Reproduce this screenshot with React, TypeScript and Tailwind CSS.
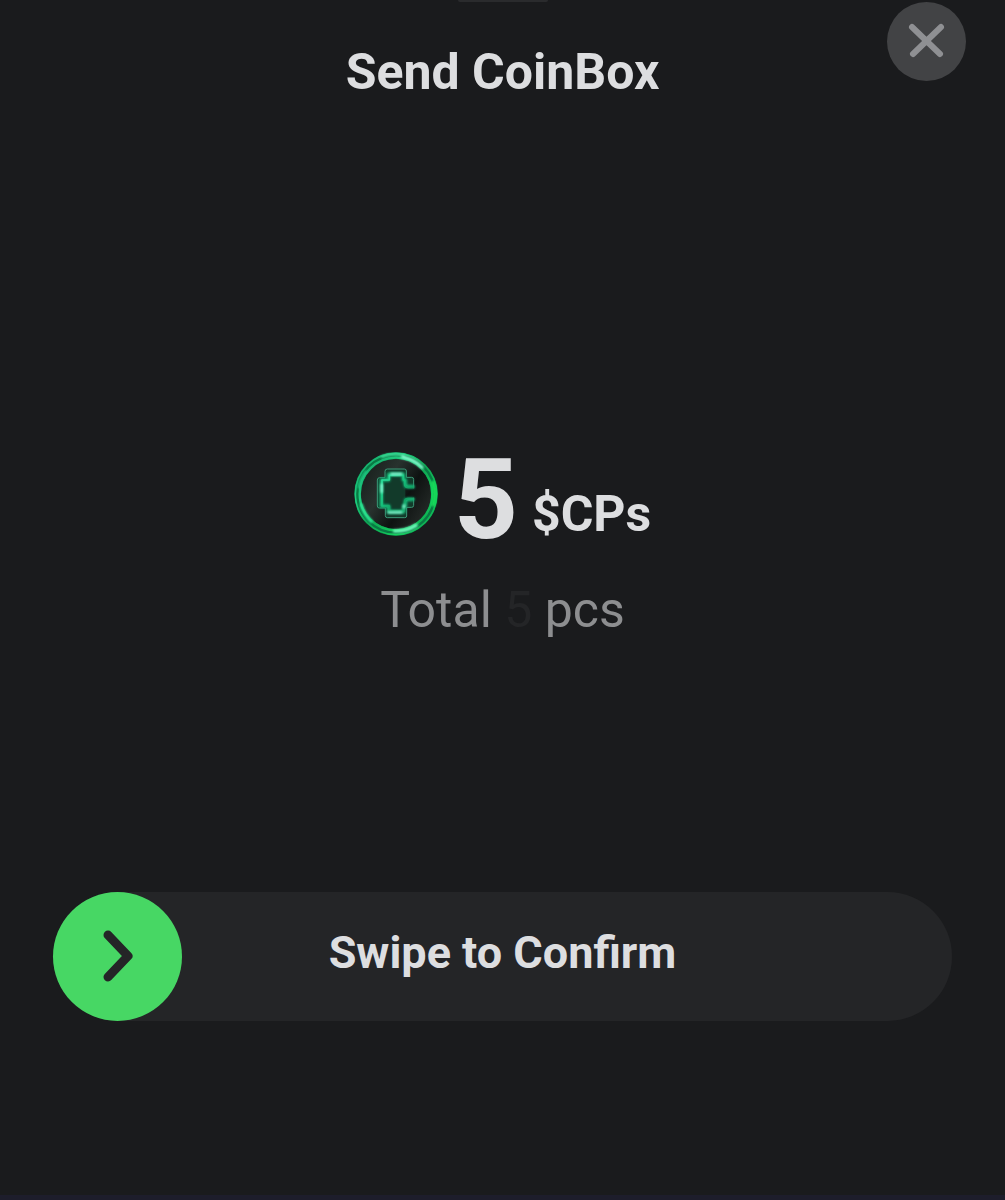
import { useState } from "react";

const CoinIcon = () => (
  <svg viewBox="0 0 252 252" className="size-[84px] shrink-0" aria-hidden="true">
    <defs>
      <linearGradient id="rim" x1="0" y1="0" x2="1" y2="1">
        <stop offset="0" stopColor="#149a62" />
        <stop offset="0.3" stopColor="#1fcf80" />
        <stop offset="0.5" stopColor="#10a252" />
        <stop offset="0.75" stopColor="#12cf5c" />
        <stop offset="1" stopColor="#0b8f4a" />
      </linearGradient>
      <linearGradient id="face" x1="0" y1="0.2" x2="1" y2="0.8">
        <stop offset="0" stopColor="#161d1a" />
        <stop offset="0.35" stopColor="#28322e" />
        <stop offset="0.62" stopColor="#0e1211" />
        <stop offset="1" stopColor="#2a302d" />
      </linearGradient>
      <linearGradient id="letter" x1="0" y1="0" x2="1" y2="1">
        <stop offset="0" stopColor="#2fe3a0" />
        <stop offset="0.4" stopColor="#16c47e" />
        <stop offset="0.65" stopColor="#0f9a5e" />
        <stop offset="1" stopColor="#1fbd7a" />
      </linearGradient>
      <filter id="soft" x="-30%" y="-30%" width="160%" height="160%">
        <feGaussianBlur stdDeviation="3" />
      </filter>
    </defs>

    <circle cx="126" cy="126" r="115" fill="url(#face)" stroke="#087a44" strokeWidth="20" />
    <circle cx="126" cy="126" r="122" fill="none" stroke="url(#rim)" strokeWidth="5" />
    <circle cx="126" cy="126" r="109" fill="none" stroke="url(#rim)" strokeWidth="7" />
    <g fill="none" strokeLinecap="round" filter="url(#soft)">
      <path d="M84 14A118 118 0 0 1 150 11" stroke="#3edc98" strokeWidth="8" />
      <path d="M146 15A112 112 0 0 1 204 46" stroke="#7cf7c8" strokeWidth="10" />
      <path d="M22 158A110 110 0 0 0 52 208" stroke="#2fe896" strokeWidth="9" />
      <path d="M122 237A112 112 0 0 0 186 220" stroke="#6cf7b8" strokeWidth="11" />
      <path d="M237 92A116 116 0 0 1 238 158" stroke="#16e05a" strokeWidth="12" />
      <path d="M14 106A114 114 0 0 1 36 58" stroke="#1fc982" strokeWidth="7" />
    </g>

    {/* pixel-style C: dark body, thin outer bevel, glowing inner line */}
    <g fill="none" strokeLinejoin="round" strokeLinecap="round">
      <path
        d="M100 51H151Q157 51 157 57V76H173Q179 76 179 82V108H154V138H179V160Q179 166 173 166H158V192Q158 197 152 197H100Q94 197 94 191V168H76Q70 168 70 162V84Q70 77 77 77H93V58Q93 51 100 51Z"
        fill="#123a2a"
      />
      <path
        d="M179 108V82Q179 76 173 76H157V57Q157 51 151 51H100Q93 51 93 58V77H77Q70 77 70 84V162Q70 168 76 168H94V191Q94 197 100 197H152Q158 197 158 192V166H173Q179 166 179 160V138"
        stroke="#3d9a78"
        strokeWidth="3"
      />
      <path
        d="M177 104H162Q154 104 154 96V84H148V67H104V84H82V162H104V179H149V162H154V150Q154 142 162 142H177"
        stroke="#12b877"
        strokeWidth="11"
        filter="url(#soft)"
      />
      <path
        d="M177 106H163Q152 106 152 96V84H148V70H106V84H84V162H106V177H149V162H152V150Q152 140 163 140H177"
        stroke="url(#letter)"
        strokeWidth="5"
      />
      <g stroke="#8df7d6" strokeWidth="7" filter="url(#soft)">
        <path d="M112 66H142" />
        <path d="M83 98V120" />
        <path d="M104 181H142" />
        <path d="M150 160V166" />
      </g>
    </g>
  </svg>
);

const SwipeToConfirm = () => {
  const [progress, setProgress] = useState(0);

  return (
    <div className="relative flex h-[129px] items-center justify-center rounded-full bg-[#242527]">
      <label htmlFor="confirm" className="-mt-2 text-[45px] leading-[54px] font-bold">
        Swipe to Confirm
      </label>
      <input
        id="confirm"
        type="range"
        min={0}
        max={100}
        value={progress}
        onChange={(e) => setProgress(Number(e.target.value))}
        className="absolute inset-0 h-full w-full cursor-pointer appearance-none rounded-full bg-transparent [&::-webkit-slider-thumb]:size-[129px] [&::-webkit-slider-thumb]:appearance-none [&::-webkit-slider-thumb]:rounded-full [&::-webkit-slider-thumb]:bg-[#47d764]"
      />
      {/* the arrow rides on the thumb */}
      <div className="pointer-events-none absolute inset-y-0 right-[129px] left-0">
        <div className="relative h-full" style={{ left: `${progress}%` }}>
          <svg viewBox="0 0 129 129" className="size-[129px]" aria-hidden="true">
            <path
              d="M55 43L75 64L55 85"
              fill="none"
              stroke="#242527"
              strokeWidth="9"
              strokeLinecap="round"
              strokeLinejoin="round"
            />
          </svg>
        </div>
      </div>
    </div>
  );
};

export default function App() {
  return (
    <div className="flex min-h-screen flex-col border-b-[5px] border-[#1d1d2b] bg-[#1a1b1d] font-[Roboto,sans-serif] text-[#dddee0]">
      <header className="relative flex flex-col items-center">
        <div className="h-[2px] w-[90px] rounded-b-full bg-[#2a2b2d]" />
        <h1 className="mt-10 text-[50px] leading-[60px] font-bold">Send CoinBox</h1>
        <button
          type="button"
          aria-label="Close"
          className="absolute top-[2px] right-[39px] flex size-[79px] items-center justify-center rounded-full bg-[#424345]"
        >
          <svg viewBox="0 0 79 79" className="size-full" aria-hidden="true">
            <path d="M25 25L53 52M54 25L26 52" fill="none" stroke="#8f9093" strokeWidth="6" strokeLinecap="round" />
          </svg>
        </button>
      </header>

      <main className="flex flex-1 flex-col items-center justify-center pt-[90px]">
        <div className="flex items-end">
          <div className="mb-5">
            <CoinIcon />
          </div>
          <span className="ml-4 text-[112px] leading-[112px] font-bold">5</span>
          <span className="mb-3 ml-[14px] text-[50px] leading-[60px] font-bold">$CPs</span>
        </div>
        <p className="mt-6 text-[50px] leading-[60px] text-[#8d8e90]">
          Total <span className="text-[#242527]">5</span> pcs
        </p>
      </main>

      <footer className="px-[53px] pb-[174px]">
        <SwipeToConfirm />
      </footer>
    </div>
  );
}
